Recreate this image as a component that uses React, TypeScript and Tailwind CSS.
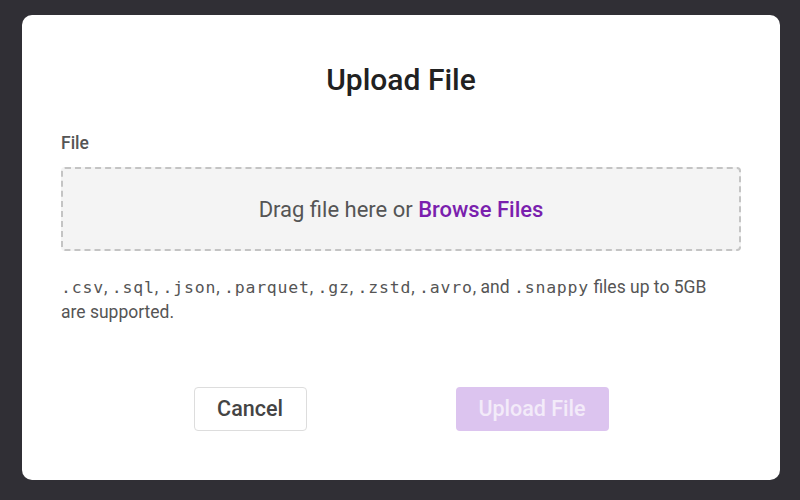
import React from "react";

export default function App() {
  const mono = { fontFamily: '"DejaVu Sans Mono", "Liberation Mono", monospace' } as React.CSSProperties;
  const m = "text-[16.5px] tracking-[0.8px]";
  return (
    <div className="w-[800px] h-[500px] bg-[#302f35] pt-[15px] pl-[22px]" style={{ fontFamily: 'Roboto, "Noto Sans", sans-serif' }}>
      <div className="w-[758px] h-[465px] bg-white rounded-[10px] px-[39px] flex flex-col">
        <h1 className="mt-[46px] h-[38px] text-center text-[30px] leading-[38px] font-medium text-[#212121]">Upload File</h1>
        <div className="mt-[34px] text-[17.5px] leading-[20px] font-medium text-[#555555]">File</div>
        <div className="mt-[14px] h-[84px] w-[680px] rounded-[4px] border-2 border-dashed border-[#c4c4c4] bg-[#f4f4f4] flex items-center justify-center text-[22px] text-[#555555]">
          <span>
            Drag file here or <span className="font-medium text-[#7a1fae]">Browse Files</span>
          </span>
        </div>
        <p className="mt-[24px] max-w-[670px] text-[17.5px] leading-[25px] text-[#555555]">
          <span style={mono} className={m}>.csv</span>, <span style={mono} className={m}>.sql</span>, <span style={mono} className={m}>.json</span>, <span style={mono} className={m}>.parquet</span>, <span style={mono} className={m}>.gz</span>, <span style={mono} className={m}>.zstd</span>, <span style={mono} className={m}>.avro</span>, and <span style={mono} className={m}>.snappy</span> files up to 5GB are supported.
        </p>
        <div className="mt-[62px] flex justify-center gap-[149px]">
          <button className="w-[113px] h-[44px] rounded-[4px] border border-[#dddddd] bg-white text-[21.5px] font-medium text-[#444444]">Cancel</button>
          <button className="w-[153px] h-[44px] rounded-[4px] bg-[#dcc4ef] text-[21.5px] font-medium text-[#f3ebf9]">Upload File</button>
        </div>
      </div>
    </div>
  );
}
